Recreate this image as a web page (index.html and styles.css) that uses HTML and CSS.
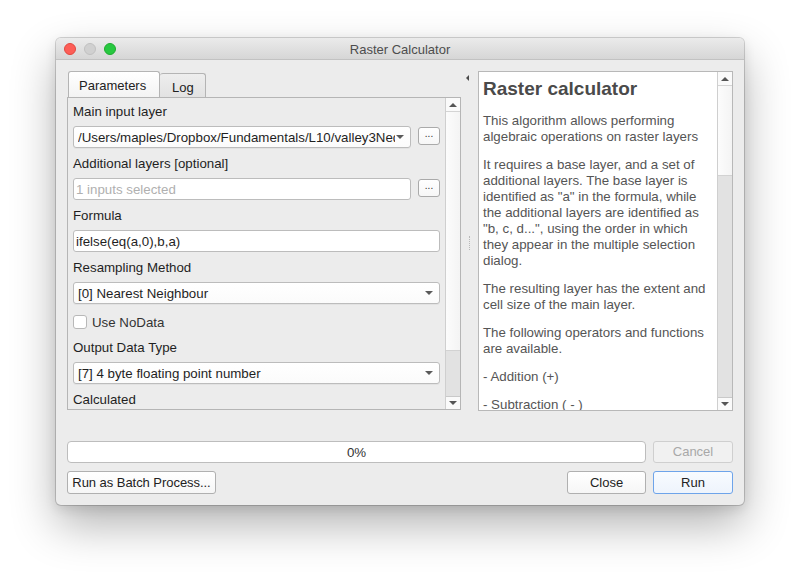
FILE: index.html
```html
<!DOCTYPE html>
<html>
<head>
<meta charset="utf-8">
<title>Raster Calculator</title>
<link rel="stylesheet" href="styles.css">
</head>
<body>
<div class="window">
  <div class="titlebar">
    <div class="lights"><span class="light red"></span><span class="light gray"></span><span class="light green"></span></div>
    <div class="title">Raster Calculator</div>
    <div></div>
  </div>
  <div class="body">
    <div class="main">
      <div class="leftcol">
        <div class="tabs">
          <div class="tab active">Parameters</div>
          <div class="tab">Log</div>
        </div>
        <div class="frame">
          <div class="scrollarea">
            <div class="label first">Main input layer</div>
            <div class="fieldrow">
              <div class="combo short"><span class="value">/Users/maples/Dropbox/Fundamentals/L10/valley3Ned.tif</span><span class="caret"></span></div>
              <div class="dots">...</div>
            </div>
            <div class="label">Additional layers [optional]</div>
            <div class="fieldrow">
              <div class="input short placeholder">1 inputs selected</div>
              <div class="dots">...</div>
            </div>
            <div class="label">Formula</div>
            <div class="fieldrow">
              <div class="input">ifelse(eq(a,0),b,a)</div>
            </div>
            <div class="label">Resampling Method</div>
            <div class="fieldrow">
              <div class="combo"><span class="value">[0] Nearest Neighbour</span><span class="caret"></span></div>
            </div>
            <div class="checkrow"><span class="checkbox"></span><span class="checklabel">Use NoData</span></div>
            <div class="label">Output Data Type</div>
            <div class="fieldrow">
              <div class="combo"><span class="value">[7] 4 byte floating point number</span><span class="caret"></span></div>
            </div>
            <div class="label">Calculated</div>
          </div>
          <div class="vscroll leftbar">
            <div class="arrow up"></div>
            <div class="thumb"></div>
            <div class="track"></div>
            <div class="arrow down"></div>
          </div>
        </div>
      </div>
      <div class="splitter">
        <span class="collapse"></span>
        <span class="grip"></span>
      </div>
      <div class="help">
        <div class="helptext">
          <h1>Raster calculator</h1>
          <p>This algorithm allows performing algebraic operations on raster layers</p>
          <p>It requires a base layer, and a set of additional layers. The base layer is identified as "a" in the formula, while the additional layers are identified as "b, c, d...", using the order in which they appear in the multiple selection dialog.</p>
          <p>The resulting layer has the extent and cell size of the main layer.</p>
          <p>The following operators and functions are available.</p>
          <p>- Addition (+)</p>
          <p>- Subtraction ( - )</p>
        </div>
        <div class="vscroll rightbar">
          <div class="arrow up"></div>
          <div class="thumb"></div>
          <div class="track"></div>
          <div class="arrow down"></div>
        </div>
      </div>
    </div>
    <div class="progressrow">
      <div class="progress">0%</div>
      <div class="btn cancel">Cancel</div>
    </div>
    <div class="buttonrow">
      <div class="btn batch">Run as Batch Process...</div>
      <div class="spacer"></div>
      <div class="btn close">Close</div>
      <div class="btn run">Run</div>
    </div>
  </div>
</div>
</body>
</html>
```
FILE: styles.css
```css
html, body {
  margin: 0;
  padding: 0;
  background: #ffffff;
}
body {
  font-family: "Liberation Sans", Arial, sans-serif;
  font-size: 13.3px;
  color: #222222;
  padding: 38px 0 0 56px;
  height: 579px;
  box-sizing: border-box;
  overflow: hidden;
}
.window {
  width: 688px;
  height: 467px;
  box-sizing: border-box;
  background: #ececec;
  border-radius: 5px;
  box-shadow: 0 0 0 1px rgba(0,0,0,0.16), 0 20px 45px rgba(0,0,0,0.30), 0 4px 12px rgba(0,0,0,0.10);
  display: flex;
  flex-direction: column;
  overflow: hidden;
}
.titlebar {
  height: 22px;
  box-sizing: border-box;
  padding-top: 1px;
  background: linear-gradient(#ebebeb, #d6d6d6);
  border-bottom: 1px solid #c2c2c2;
  display: grid;
  grid-template-columns: 1fr auto 1fr;
  align-items: center;
}
.lights {
  display: flex;
  gap: 8px;
  padding-left: 8px;
}
.light {
  width: 12px;
  height: 12px;
  border-radius: 50%;
  box-sizing: border-box;
}
.light.red { background: #fd5e57; border: 1px solid #e1483f; }
.light.gray { background: #d0d0d0; border: 1px solid #c0c0c0; }
.light.green { background: #27c840; border: 1px solid #1eab2f; }
.title {
  color: #4d4d4d;
  font-size: 13px;
}
.body {
  flex: 1;
  padding: 11px;
  display: flex;
  flex-direction: column;
}
.main {
  height: 340px;
  display: flex;
}
.leftcol {
  width: 394px;
  display: flex;
  flex-direction: column;
}
.tabs {
  height: 26px;
  display: flex;
  align-items: flex-end;
  padding-left: 1px;
}
.tab {
  box-sizing: border-box;
  border: 1px solid #b4b4b4;
  border-bottom: none;
  border-radius: 3px 3px 0 0;
  color: #222;
  font-size: 13px;
}
.tab.active {
  height: 26px;
  width: 92px;
  background: linear-gradient(#ffffff, #f3f3f3);
  padding: 6px 0 0 10px;
  position: relative;
  z-index: 1;
}
.tab:not(.active) {
  height: 24px;
  width: 46px;
  background: linear-gradient(#eeeeee, #e2e2e2);
  border-left: none;
  padding: 6px 0 0 12px;
}
.frame {
  height: 313px;
  box-sizing: border-box;
  border: 1px solid #b5b5b5;
  background: #ececec;
  display: flex;
  overflow: hidden;
}
.scrollarea {
  flex: 1;
  padding: 5px 5px 0 5px;
  overflow: hidden;
}
.label {
  height: 16px;
  box-sizing: border-box;
  padding-top: 1px;
  line-height: 16px;
  margin-bottom: 7px;
  color: #1f1f1f;
  white-space: nowrap;
}
.fieldrow {
  display: flex;
  align-items: flex-start;
  gap: 7px;
  margin-bottom: 7px;
}
.combo, .input {
  height: 22px;
  box-sizing: border-box;
  flex: 1;
  min-width: 0;
  border: 1px solid #bcbcbc;
  border-radius: 3px;
  background: #ffffff;
  display: flex;
  align-items: center;
  white-space: nowrap;
  overflow: hidden;
}
.combo {
  background: linear-gradient(#ffffff, #fbfbfb);
  box-shadow: 0 1px 0 rgba(0,0,0,0.04);
  padding: 0 6px 0 4px;
}
.combo.short, .input.short {
  flex: 0 0 338px;
}
.combo .value {
  flex: 1;
  min-width: 0;
  overflow: hidden;
  color: #1f1f1f;
}
.combo.short .value {
  margin-right: 1px;
}
.caret {
  width: 0;
  height: 0;
  border-left: 4px solid transparent;
  border-right: 4px solid transparent;
  border-top: 4px solid #5a5a5a;
  flex: none;
}
.input {
  padding: 0 2px;
  color: #1f1f1f;
}
.input.placeholder {
  color: #b0b0b0;
}
.dots {
  width: 22px;
  height: 18px;
  margin-top: 1px;
  box-sizing: border-box;
  border: 1px solid #aaaaaa;
  border-radius: 3px;
  background: linear-gradient(#ffffff, #f7f7f7);
  font-size: 10px;
  line-height: 12px;
  text-align: center;
  color: #333;
}
.checkrow {
  display: flex;
  align-items: center;
  height: 14px;
  margin-top: 11px;
  margin-bottom: 10px;
}
.checkbox {
  width: 14px;
  height: 14px;
  box-sizing: border-box;
  border: 1px solid #b8b8b8;
  border-radius: 3px;
  background: #fff;
}
.checklabel {
  margin-left: 5px;
  color: #333;
}
.vscroll {
  width: 15px;
  flex: none;
  box-sizing: border-box;
  border-left: 1px solid #cfcfcf;
  display: flex;
  flex-direction: column;
  background: #e3e3e3;
}
.arrow {
  flex: none;
  background: #fafafa;
  display: flex;
  align-items: center;
  justify-content: center;
}
.arrow.up {
  height: 14px;
  border-bottom: 1px solid #d4d4d4;
  box-sizing: border-box;
}
.arrow.down {
  height: 13px;
  border-top: 1px solid #c9c9c9;
  box-sizing: border-box;
}
.arrow.up::after {
  content: "";
  border-left: 4px solid transparent;
  border-right: 4px solid transparent;
  border-bottom: 4px solid #555;
}
.arrow.down::after {
  content: "";
  border-left: 4px solid transparent;
  border-right: 4px solid transparent;
  border-top: 4px solid #555;
}
.thumb {
  flex: none;
  background: linear-gradient(90deg, #fcfcfc, #f4f4f4);
  border-bottom: 1px solid #d2d2d2;
}
.leftbar .thumb { height: 238px; }
.rightbar .thumb { height: 89px; }
.track {
  flex: 1;
  background: #e2e2e2;
}
.splitter {
  width: 17px;
  display: flex;
  flex-direction: column;
  align-items: flex-start;
}
.collapse {
  margin: 4px 0 0 5px;
  width: 0;
  height: 0;
  border-top: 3px solid transparent;
  border-bottom: 3px solid transparent;
  border-right: 3px solid #4a4a4a;
}
.grip {
  margin: 155px 0 0 8px;
  width: 0;
  height: 14px;
  border-left: 1px dotted #b8b8b8;
}
.help {
  width: 255px;
  height: 340px;
  box-sizing: border-box;
  border: 1px solid #b8b8b8;
  background: #ffffff;
  display: flex;
  overflow: hidden;
}
.helptext {
  flex: 1;
  padding: 6px 4px 0 4px;
  overflow: hidden;
  color: #555555;
  font-size: 13.3px;
  line-height: 16px;
}
.helptext h1 {
  margin: 0 0 13px 0;
  font-size: 19px;
  line-height: 22px;
  font-weight: bold;
  color: #4a4a4a;
}
.helptext p {
  margin: 0 0 12px 0;
}
.progressrow {
  margin-top: 30px;
  height: 22px;
  display: flex;
  gap: 7px;
}
.progress {
  flex: 1;
  box-sizing: border-box;
  border: 1px solid #bdbdbd;
  border-radius: 4px;
  background: #ffffff;
  text-align: center;
  line-height: 21px;
  color: #333;
}
.btn {
  box-sizing: border-box;
  border: 1px solid #b0b0b0;
  border-radius: 3px;
  background: linear-gradient(#ffffff, #f6f6f6);
  text-align: center;
  color: #222;
  white-space: nowrap;
  font-size: 13px;
}
.cancel {
  width: 80px;
  line-height: 20px;
  color: #a8a8a8;
  border-color: #cfcfcf;
  background: #f1f1f1;
}
.buttonrow {
  margin-top: 8px;
  height: 23px;
  display: flex;
  gap: 7px;
}
.buttonrow .btn {
  line-height: 21px;
}
.batch {
  width: 149px;
  letter-spacing: -0.05px;
}
.spacer { flex: 1; }
.close { width: 79px; }
.run {
  width: 80px;
  border-color: #6ea4ea;
  background: linear-gradient(#f8fbff, #eef4fc);
}
```
